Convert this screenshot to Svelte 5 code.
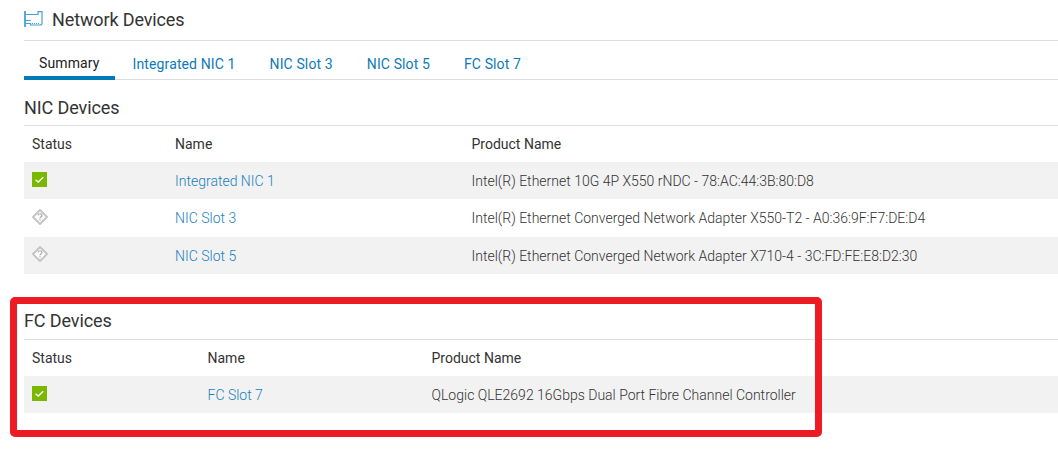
<script>
	let tabs = ["Summary", "Integrated NIC 1", "NIC Slot 3", "NIC Slot 5", "FC Slot 7"];

	let nicDevices = [
		{ status: "ok", name: "Integrated NIC 1", product: "Intel(R) Ethernet 10G 4P X550 rNDC - 78:AC:44:3B:80:D8" },
		{ status: "unknown", name: "NIC Slot 3", product: "Intel(R) Ethernet Converged Network Adapter X550-T2 - A0:36:9F:F7:DE:D4" },
		{ status: "unknown", name: "NIC Slot 5", product: "Intel(R) Ethernet Converged Network Adapter X710-4 - 3C:FD:FE:E8:D2:30" }
	];
	let fcDevices = [
		{ status: "ok", name: "FC Slot 7", product: "QLogic QLE2692 16Gbps Dual Port Fibre Channel Controller" }
	];

	let sections = [
		{ title: "NIC Devices", cls: "nic", rows: nicDevices },
		{ title: "FC Devices", cls: "fc", rows: fcDevices }
	];
</script>

<div class="page">
	<div class="title">
		<svg class="card-icon" width="19" height="16" viewBox="0 0 19 16" fill="none" stroke="#4a9fd4" stroke-width="1.2">
			<path d="M1 0V16" stroke-width="1.8" />
			<path d="M1 3.5H14V0.6H18V12C18 13.2 17.2 14 16 14H6.5V12.5H1" />
			<path d="M1 9.5H6.5" />
			<path d="M8 12.5H15.5" stroke-dasharray="1 1" />
		</svg>
		<h1>Network Devices</h1>
	</div>

	<div class="tabs">
		{#each tabs as tab, i}
			<span class="tab" class:active={i === 0}>{tab}</span>
		{/each}
	</div>

	{#each sections as section}
		<section class={section.cls}>
			<h2>{section.title}</h2>
			<div class="row head">
				<div class="status">Status</div>
				<div class="name">Name</div>
				<div>Product Name</div>
			</div>
			{#each section.rows as row}
				<div class="row item">
					<div class="status">
						{#if row.status === "ok"}
							<svg width="15" height="15" viewBox="0 0 15 15">
								<rect width="15" height="15" fill="#7ab800" />
								<path d="M3.5 7.8L6.2 10L11.2 5.2" fill="none" stroke="#fff" stroke-width="1.4" />
							</svg>
						{:else}
							<svg width="16" height="16" viewBox="0 0 16 16">
								<path d="M8 1L15 8L8 15L1 8Z" fill="#fff" stroke="#c4c4c4" stroke-width="1.8" stroke-linejoin="round" />
								<path d="M6 6.5C6.1 4.2 10 4.2 10 6.4C10 7.8 8 7.8 8 9.4M8 10.2V11.6" fill="none" stroke="#aaa" stroke-width="1.2" />
							</svg>
						{/if}
					</div>
					<div class="name link">{row.name}</div>
					<div class="product">{row.product}</div>
				</div>
			{/each}
		</section>
	{/each}

	<div class="callout"></div>
</div>

<style>
	:global(body) {
		background: #fff;
	}

	.page {
		position: relative;
		height: 466px;
		padding-left: 24px;
		box-sizing: border-box;
		overflow: hidden;
		font-family: Roboto, "Liberation Sans", sans-serif;
		font-size: 14px;
		color: #444;
	}

	.title {
		display: flex;
		align-items: center;
		height: 40px;
		border-bottom: 1px solid #ddd;
	}
	.card-icon {
		margin-right: 9px;
		margin-top: -3px;
	}
	h1 {
		margin: 0 0 2px;
		font-size: 18px;
		font-weight: 400;
		letter-spacing: -0.13px;
		color: #333;
	}

	.tabs {
		display: flex;
		height: 38px;
		border-bottom: 1px solid #ddd;
	}
	.tab {
		padding: 14px 15px 0;
		margin-right: 4px;
		color: #0e7ab8;
		box-sizing: border-box;
		line-height: 18px;
		letter-spacing: 0.12px;
	}
	.tab:first-child {
		margin-right: 3px;
	}
	.tab.active {
		height: 39px;
		padding-top: 13px;
		color: #222;
		border-bottom: 4px solid #007db8;
	}

	h2 {
		margin: 0;
		height: 46px;
		line-height: 56px;
		box-sizing: border-box;
		border-bottom: 1px solid #ddd;
		font-size: 18px;
		font-weight: 400;
		letter-spacing: -0.1px;
		color: #333;
	}
	.fc {
		margin-top: 22px;
	}
	.fc h2 {
		height: 44px;
		line-height: 50px;
	}

	.row {
		display: grid;
		align-items: center;
		height: 37px;
		padding-left: 8px;
	}
	.nic .row {
		grid-template-columns: 143px 296.5px 1fr;
	}
	.fc .row {
		grid-template-columns: 175.5px 224px 1fr;
	}
	.nic .head {
		height: 36px;
	}
	.fc .head {
		height: 36px;
	}
	.head {
		color: #333;
	}
	.item {
		font-weight: 300;
	}
	.item:nth-child(odd) {
		background: #f2f2f2;
	}
	.nic .item:nth-child(4) {
		height: 38px;
	}
	.status {
		display: flex;
	}
	.item .status {
		margin-top: -3px;
	}
	.link {
		color: #1a7fbd;
	}
	.product {
		color: #333;
	}

	.callout {
		position: absolute;
		left: 10px;
		top: 297px;
		width: 812px;
		height: 140px;
		box-sizing: border-box;
		border: 7px solid #ed1c24;
		border-radius: 5px;
		pointer-events: none;
	}
</style>
